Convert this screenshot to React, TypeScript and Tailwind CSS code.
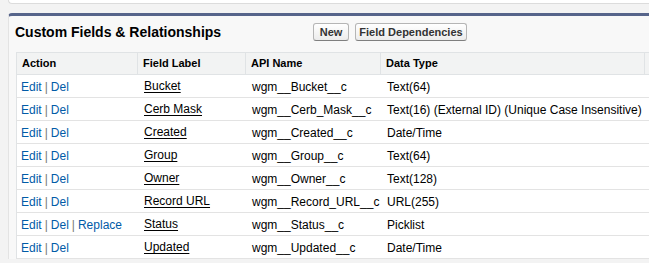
import { FC } from "react";

type Field = {
  actions: string[];
  label: string;
  api: string;
  type: string;
};

const fields: Field[] = [
  { actions: ["Edit", "Del"], label: "Bucket", api: "wgm__Bucket__c", type: "Text(64)" },
  { actions: ["Edit", "Del"], label: "Cerb Mask", api: "wgm__Cerb_Mask__c", type: "Text(16) (External ID) (Unique Case Insensitive)" },
  { actions: ["Edit", "Del"], label: "Created", api: "wgm__Created__c", type: "Date/Time" },
  { actions: ["Edit", "Del"], label: "Group", api: "wgm__Group__c", type: "Text(64)" },
  { actions: ["Edit", "Del"], label: "Owner", api: "wgm__Owner__c", type: "Text(128)" },
  { actions: ["Edit", "Del"], label: "Record URL", api: "wgm__Record_URL__c", type: "URL(255)" },
  { actions: ["Edit", "Del", "Replace"], label: "Status", api: "wgm__Status__c", type: "Picklist" },
  { actions: ["Edit", "Del"], label: "Updated", api: "wgm__Updated__c", type: "Date/Time" },
];

const cols = "grid grid-cols-[121px_108px_135px_264px_160px]";

const Button: FC<{ label: string; width: string }> = ({ label, width }) => (
  <button
    className={`${width} h-[18px] rounded-[3px] border border-[#b5b5b5] border-b-[#7f7f7f] bg-gradient-to-b from-white to-[#ececec] text-[11px] font-bold text-[#333] leading-none`}
  >
    {label}
  </button>
);

export default function App() {
  return (
    <div className="w-[649px] h-[263px] overflow-hidden bg-[#f3f3f3] font-['Liberation_Sans',Arial,sans-serif] text-[12px] text-black">
      {/* bottom of the panel above */}
      <div className="ml-2 h-[4px] bg-white border-l border-b border-[#dcdcdc] rounded-bl-[4px]" />

      {/* Custom Fields panel */}
      <div className="ml-2 mt-[9px] w-[800px] bg-[#f8f8f8] border-t-[3px] border-t-[#56648a] border-l border-l-[#e3e3e3] rounded-tl-[4px]">
        <div className="flex items-center h-[36px] pb-[4px]">
          <h2 className="w-[304px] pl-[6px] text-[14px] font-bold text-black">
            Custom Fields &amp; Relationships
          </h2>
          <div className="flex gap-[6px]">
            <Button label="New" width="w-[36px]" />
            <Button label="Field Dependencies" width="w-[112px]" />
          </div>
        </div>

        <div className="ml-[7px] bg-white">
          {/* header */}
          <div className={`${cols} h-[23px] bg-[#f2f3f3] border-t border-b border-[#e0e3e5] text-[11px] font-bold`}>
            {["Action", "Field Label", "API Name", "Data Type", ""].map((h, i) => (
              <div key={i} className="flex items-center pl-[5px] border-l border-l-[#e0e3e5]">
                {h}
              </div>
            ))}
          </div>

          {/* rows */}
          {fields.map((f) => (
            <div key={f.api} className={`${cols} h-[23px] border-b border-[#e3e3e3] border-l border-l-[#e0e3e5]`}>
              <div className="flex items-center pl-[4px] pt-[1px] text-[#015ba7]">
                {f.actions.map((a, i) => (
                  <span key={a}>
                    {i > 0 && <span className="text-[#777] px-[3px]">|</span>}
                    {a}
                  </span>
                ))}
              </div>
              <div className="flex items-center pl-[6px]">
                <span className="underline underline-offset-2">{f.label}</span>
              </div>
              <div className="flex items-center pl-[6px] pt-[1px]">{f.api}</div>
              <div className="flex items-center pl-[6px] pt-[1px] whitespace-nowrap">{f.type}</div>
              <div />
            </div>
          ))}
        </div>
      </div>
    </div>
  );
}
